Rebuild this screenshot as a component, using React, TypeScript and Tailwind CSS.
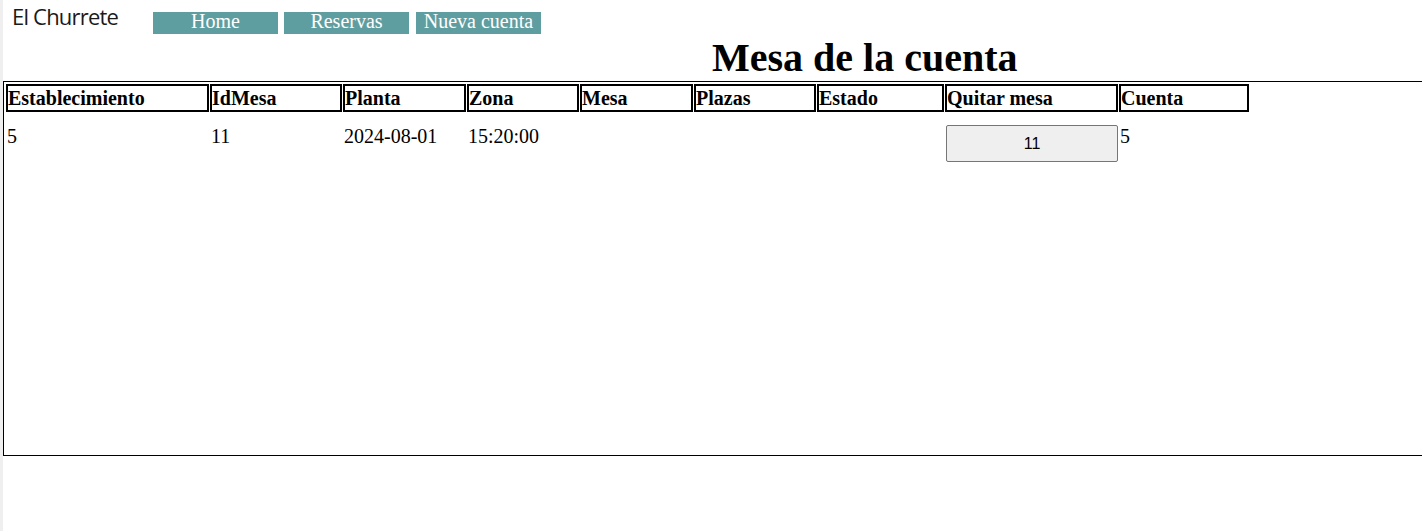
import React from "react";

const cols: { label: string; w: string }[] = [
  { label: "Establecimiento", w: "w-[203px]" },
  { label: "IdMesa", w: "w-[132px]" },
  { label: "Planta", w: "w-[123px]" },
  { label: "Zona", w: "w-[112px]" },
  { label: "Mesa", w: "w-[113px]" },
  { label: "Plazas", w: "w-[122px]" },
  { label: "Estado", w: "w-[127px]" },
  { label: "Quitar mesa", w: "w-[173px]" },
  { label: "Cuenta", w: "w-[130px]" },
];

const serif = "font-['Liberation_Serif','Times_New_Roman',serif]";

export default function App() {
  const data = ["5", "11", "2024-08-01", "15:20:00", "", "", "", "BTN", "5"];
  return (
    <div className="w-[1422px] h-[531px] overflow-hidden bg-white border-l-[3px] border-[#efefef]">
      <div className="flex items-start h-[37px]">
        <div className="w-[150px] pl-[9px] pt-[3px] text-[22px] leading-[27px] tracking-[-0.8px] text-[#1a1a1a] font-['Open_Sans',sans-serif]">
          El Churrete
        </div>
        <div className={`flex mt-[12px] ${serif} text-[20px] text-white`}>
          <div className="w-[125px] h-[22px] leading-[19px] text-center bg-[#5f9ea0]">Home</div>
          <div className="w-[125px] h-[22px] leading-[19px] text-center bg-[#5f9ea0] ml-[6px]">Reservas</div>
          <div className="w-[125px] h-[22px] leading-[19px] text-center bg-[#5f9ea0] ml-[7px]">Nueva cuenta</div>
        </div>
      </div>
      <h1 className={`ml-[709px] ${serif} font-bold text-[40px] leading-[41px] text-black`}>Mesa de la cuenta</h1>
      <div className={`mt-[3px] w-[1500px] h-[375px] border border-black pt-[2px] pl-[2px] ${serif} text-black`}>
        <div className="flex gap-[1px]">
          {cols.map((c) => (
            <div key={c.label} className={`${c.w} h-[28px] border-2 border-black font-bold text-[20px] leading-[24px]`}>
              {c.label}
            </div>
          ))}
        </div>
        <div className="flex gap-[1px] mt-[13px] items-start">
          {cols.map((c, i) => (
            <div key={c.label} className={`${c.w} pl-[1px] text-[20px] leading-[23px]`}>
              {data[i] === "BTN" ? (
                <button className="w-[172px] h-[37px] bg-[#efefef] border border-[#767676] rounded-[2px] text-[16px] leading-[18px] font-['Liberation_Sans',Arial,sans-serif] text-black">
                  11
                </button>
              ) : (
                data[i]
              )}
            </div>
          ))}
        </div>
      </div>
    </div>
  );
}
